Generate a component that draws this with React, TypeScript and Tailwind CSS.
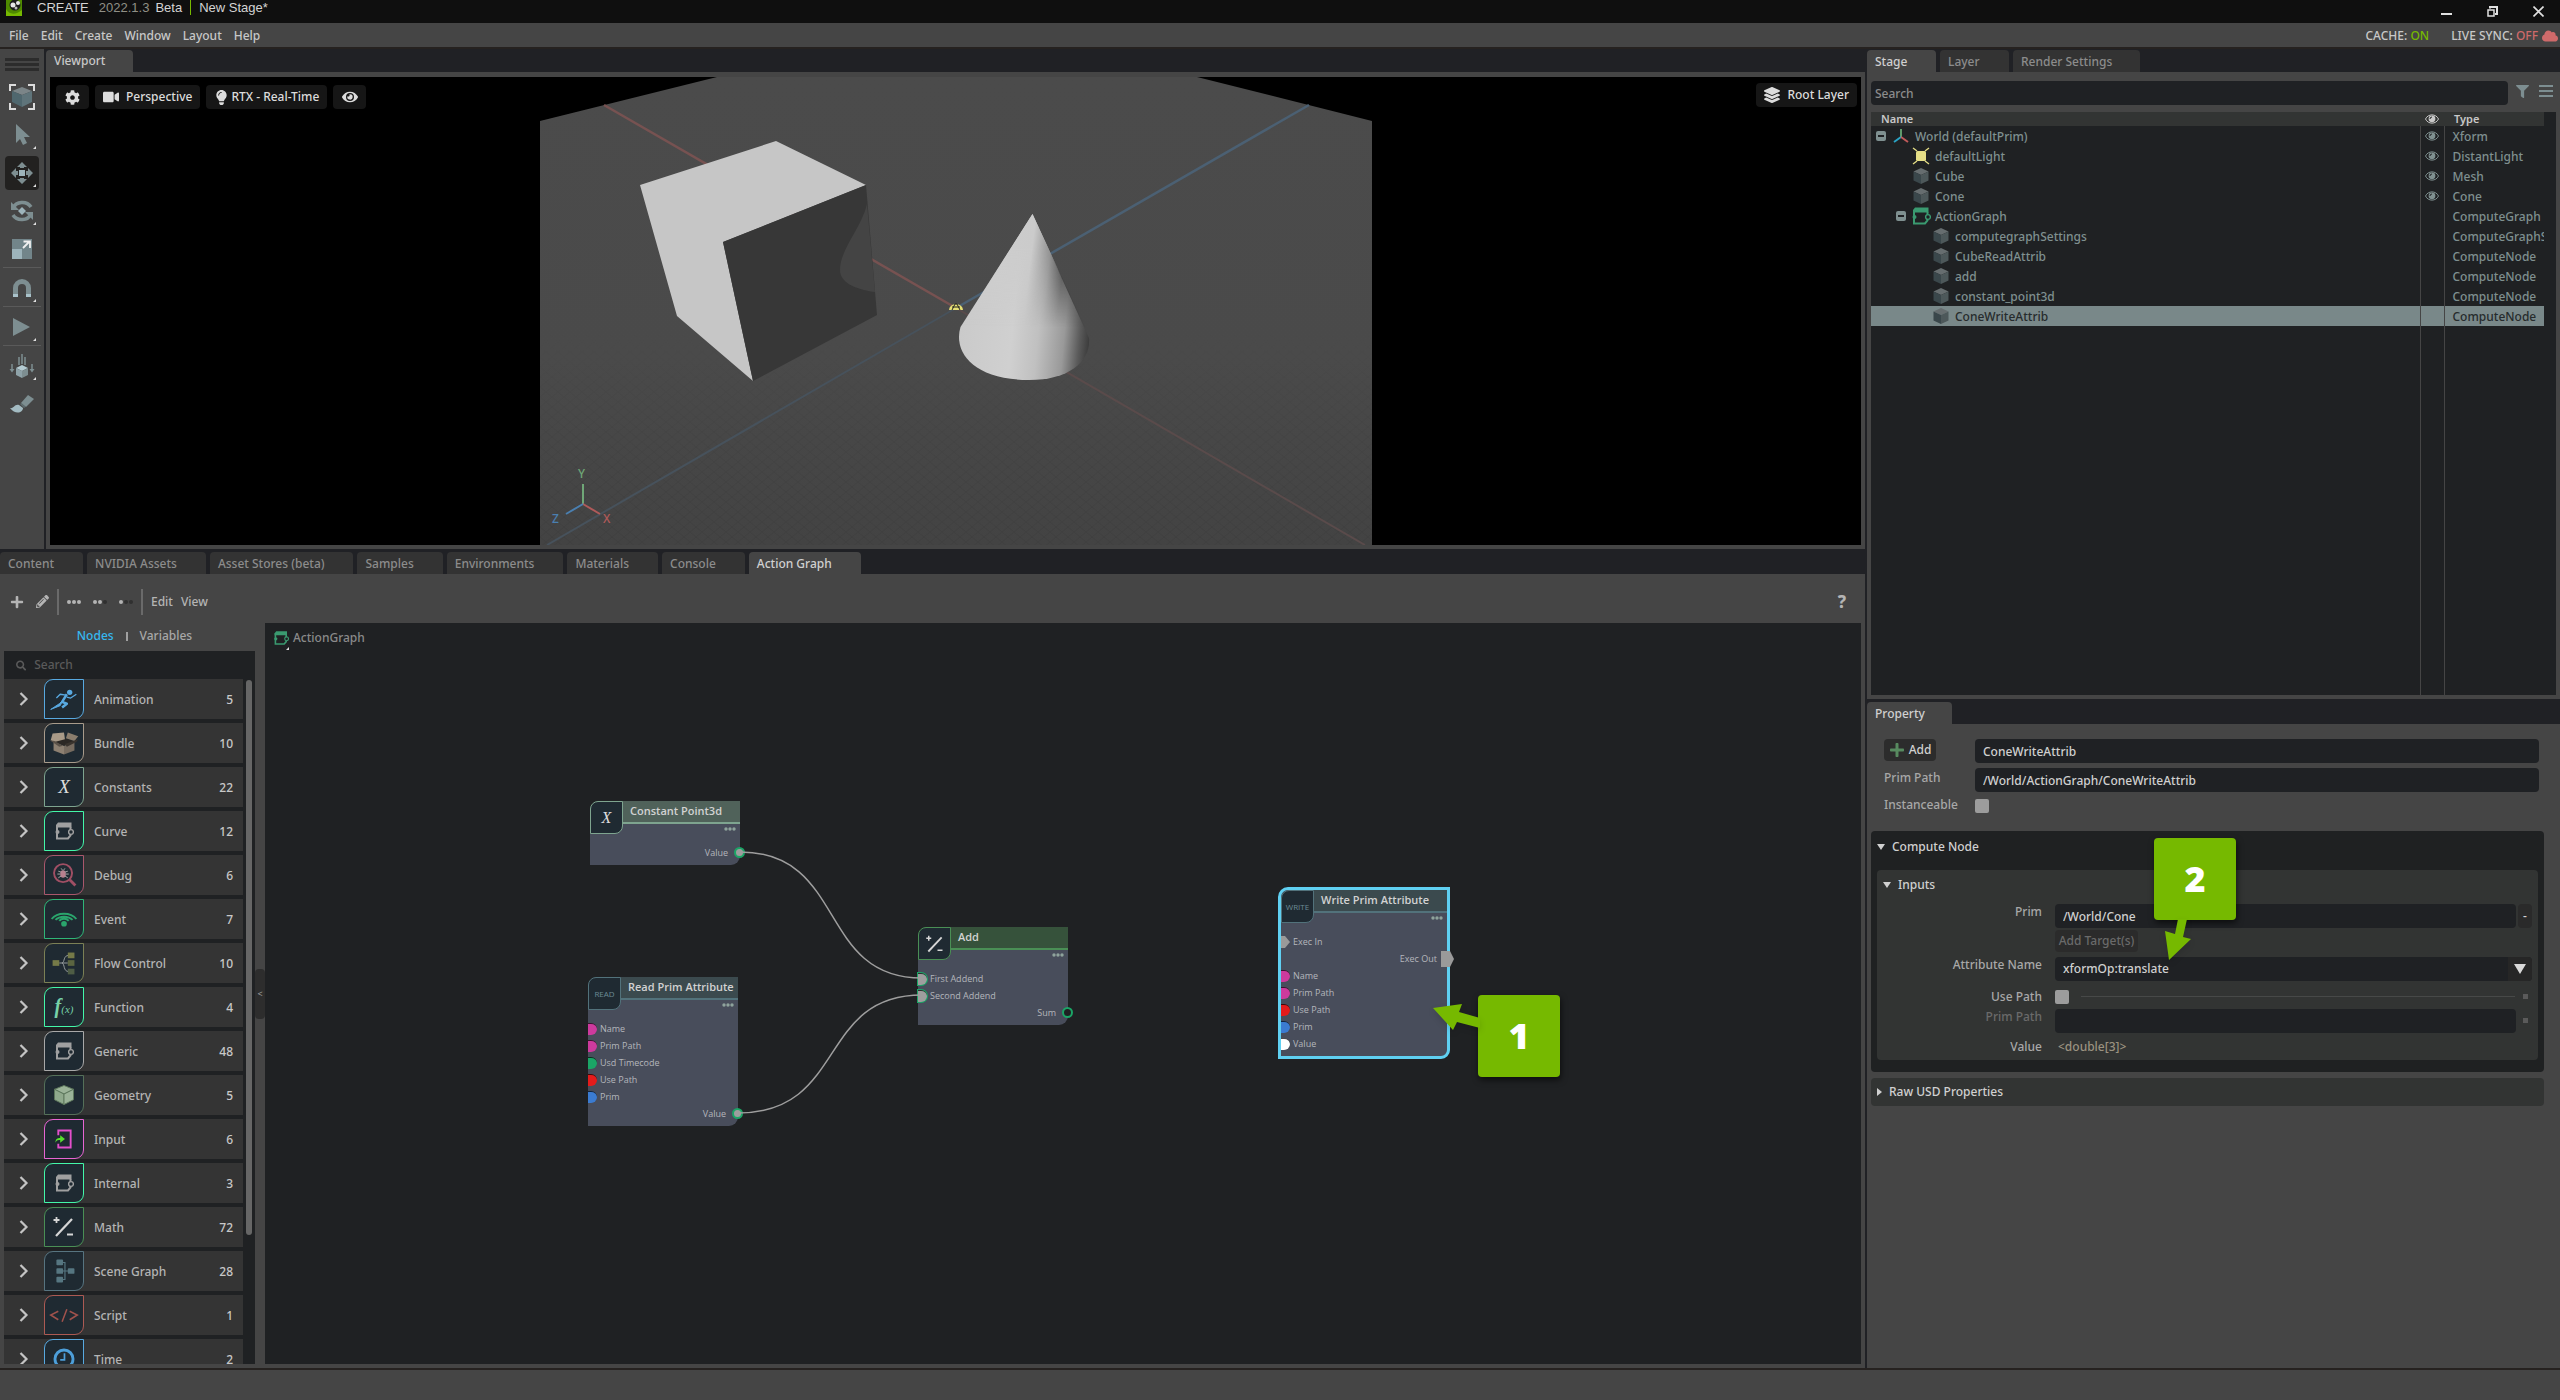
import type { ReactNode } from 'react';
import { FaCloud, FaCog, FaEye, FaFilter, FaLayerGroup, FaLightbulb, FaPencilAlt, FaPlus, FaSearch, FaVideo } from 'react-icons/fa';

const menus = ['File', 'Edit', 'Create', 'Window', 'Layout', 'Help'];

const bottomTabs = [
  'Content',
  'NVIDIA Assets',
  'Asset Stores (beta)',
  'Samples',
  'Environments',
  'Materials',
  'Console',
  'Action Graph'
];

/* ---------- shared icons ---------- */

function GraphGlyph({ className, dark = '#1f2a32' }: { className: string; dark?: string }) {
  return (
    <svg viewBox="0 0 20 20" className={className} fill="none" stroke="currentColor">
      <path d="M4 1.500h13.500v5H2V4z" fill="currentColor" stroke="none" />
      <path d="M3 5v12.500h11l2.500-3V6" strokeWidth="2" />
      <circle cx="3.500" cy="11" r="2" fill="currentColor" stroke="none" />
      <circle cx="17" cy="11" r="2.400" fill={dark} strokeWidth="1.400" />
    </svg>
  );
}

function CubeGlyph({ className }: { className: string }) {
  return (
    <svg viewBox="0 0 18 18" className={className}>
      <path d="M9 1l7.500 3.500L9 8 1.500 4.500z" fill="#666d6f" />
      <path d="M1.500 4.500L9 8v9l-7.500-3.500z" fill="#3a474b" />
      <path d="M16.500 4.500L9 8v9l7.500-3.500z" fill="#4d585a" />
    </svg>
  );
}

function Chevron() {
  return (
    <svg viewBox="0 0 10 14" className="h-[14px] w-[10px]" fill="none" stroke="#c4c4c4" strokeWidth="2.2">
      <path d="M1.500 1l6 6-6 6" />
    </svg>
  );
}

function PlusMinus({ className }: { className: string }) {
  return (
    <svg viewBox="0 0 24 24" className={className} fill="none" stroke="#d6d6d6">
      <path d="M4.500 2v6M1.500 5h6M15 19.500h6" strokeWidth="1.800" />
      <path d="M20 4L4 21" strokeWidth="2.200" />
    </svg>
  );
}

/* ---------- left toolbar ---------- */

function Corner() {
  return <path d="M31 28v3h-3z" fill="#e0e0e0" />;
}

const tools: { name: string; active?: boolean; art: ReactNode }[][] = [
  [
    {
      name: 'Select mode',
      art: (
        <g>
          <path d="M5 11V5h6M23 5h6v6M29 23v6h-6M11 29H5v-6" fill="none" stroke="#dcdcdc" strokeWidth="2" />
          <path d="M17 7l10 4-10 4-10-4z" fill="#7b8588" />
          <path d="M7 11l10 4v12L7 22z" fill="#4f676e" />
          <path d="M27 11l-10 4v12l10-5z" fill="#5f747a" />
        </g>
      )
    },
    {
      name: 'Select',
      art: (
        <g>
          <path d="M11 6v19l4-4 3 6 4-2-3-6h6z" fill="#7d8e91" />
          <Corner />
        </g>
      )
    },
    {
      name: 'Move',
      active: true,
      art: (
        <g fill="#7d8e91">
          <path d="M17 6l5 5h-3v1h-4v-1h-3zM17 28l5-5h-3v-1h-4v1h-3zM6 17l5-5v3h2v4h-2v3zM28 17l-5-5v3h-2v4h2v3z" />
          <rect x="14" y="14" width="6" height="6" fill="#9db4bb" />
          <Corner />
        </g>
      )
    },
    {
      name: 'Rotate',
      art: (
        <g>
          <path d="M8 14a10 9 0 0 1 18-1M26 20a10 9 0 0 1-18 1" fill="none" stroke="#7d8e91" strokeWidth="3.500" />
          <path d="M6 8v8h8zM28 26v-8h-8z" fill="#7d8e91" />
          <path d="M17 13l4 4-4 4-4-4z" fill="#9db4bb" />
          <Corner />
        </g>
      )
    },
    {
      name: 'Scale',
      art: (
        <g>
          <rect x="7" y="7" width="20" height="20" fill="#72858a" />
          <rect x="7" y="17" width="10" height="10" fill="#9db4bb" />
          <path d="M18 16l6-6M18.500 9.500h6.500V16" fill="none" stroke="#f0f0f0" strokeWidth="1.800" />
        </g>
      )
    }
  ],
  [
    {
      name: 'Snap',
      art: (
        <g>
          <path d="M10.500 23v-6a6.500 6.500 0 0 1 13 0v6" fill="none" stroke="#7d8e91" strokeWidth="5" />
          <path d="M8 23h5v3H8zM21 23h5v3h-5z" fill="#a9c2ca" />
          <Corner />
        </g>
      )
    }
  ],
  [
    {
      name: 'Play',
      art: (
        <g>
          <path d="M8 8l17 9-17 9z" fill="#7d8e91" />
          <Corner />
        </g>
      )
    }
  ],
  [
    {
      name: 'Physics',
      art: (
        <g>
          <path d="M14 8v8M17 5v10M20 8v8M7 15v7M27 15v7" stroke="#7d8e91" strokeWidth="1.500" />
          <path d="M4.500 20h5L7 23.500zM24.500 20h5L27 23.500z" fill="#7d8e91" />
          <path d="M17 16l6 3-6 3-6-3z" fill="#b4cbd2" />
          <path d="M11 19l6 3v7l-6-3z" fill="#8ea2a8" />
          <path d="M23 19l-6 3v7l6-3z" fill="#7d8e91" />
          <Corner />
        </g>
      )
    },
    {
      name: 'Paint',
      art: (
        <g>
          <path d="M5 21c4 1 4-4 9-3l4 3c0 5-8 7-13 0z" fill="#a3bbc2" />
          <path d="M16 16l7-8 6 4-8 8z" fill="#7d8e91" />
          <path d="M15 17l4 4 1.500-1-4-4z" fill="#5f6f72" />
        </g>
      )
    }
  ]
];

function Toolbar() {
  return (
    <aside className="flex w-11 shrink-0 flex-col items-center gap-px bg-[#454545] pt-[9px]">
      <div className="mb-[8px] flex h-[13px] w-[34px] flex-col justify-between">
        <div className="h-[3px] bg-[#2c2c2c]" />
        <div className="h-[3px] bg-[#2c2c2c]" />
        <div className="h-[3px] bg-[#2c2c2c]" />
      </div>
      {tools.map((group, i) => (
        <div
          key={i}
          className={`flex w-[38px] flex-col items-center gap-1 ${i > 0 ? 'border-t border-[#5a5a5a] pt-[3px]' : ''}`}
        >
          {group.map((tool) => (
            <button
              key={tool.name}
              aria-label={tool.name}
              className={`h-[34px] w-[34px] rounded ${tool.active ? 'bg-[#222120]' : ''}`}
            >
              <svg viewBox="0 0 34 34" className="h-full w-full">
                {tool.art}
              </svg>
            </button>
          ))}
        </div>
      ))}
    </aside>
  );
}

/* ---------- viewport ---------- */

function Scene() {
  return (
    <svg viewBox="0 0 832 468" className="h-full" fontFamily="'Noto Sans', sans-serif">
      <defs>
        <linearGradient id="cone" gradientUnits="userSpaceOnUse" x1="419" y1="262" x2="549" y2="274">
          <stop offset="0" stopColor="#cacaca" />
          <stop offset="0.400" stopColor="#d0d0d0" />
          <stop offset="0.600" stopColor="#c0c0c0" />
          <stop offset="0.800" stopColor="#999999" />
          <stop offset="0.920" stopColor="#5a5a5a" />
          <stop offset="1" stopColor="#3a3a3a" />
        </linearGradient>
        {/* the shaded side narrows towards the tip */}
        <linearGradient id="coneTip" gradientUnits="userSpaceOnUse" x1="455" y1="200" x2="521" y2="208">
          <stop offset="0" stopColor="#cdcdcd" />
          <stop offset="0.500" stopColor="#cbcbcb" />
          <stop offset="0.780" stopColor="#8f8f8f" />
          <stop offset="1" stopColor="#3a3a3a" />
        </linearGradient>
        <linearGradient id="tipFade" gradientUnits="userSpaceOnUse" x1="0" y1="170" x2="0" y2="250">
          <stop offset="0" stopColor="#fff" />
          <stop offset="1" stopColor="#000" />
        </linearGradient>
        <mask id="tipMask">
          <rect width="832" height="468" fill="url(#tipFade)" />
        </mask>
        <linearGradient id="floor" x1="0" y1="0" x2="0" y2="1">
          <stop offset="0" stopColor="#4b4b4b" />
          <stop offset="0.600" stopColor="#4a4a4a" />
          <stop offset="1" stopColor="#434343" />
        </linearGradient>
        <linearGradient id="gridFade" x1="0" y1="0" x2="0" y2="1">
          <stop offset="0.550" stopColor="#000" />
          <stop offset="1" stopColor="#fff" />
        </linearGradient>
        <pattern id="grid" width="12" height="10" patternUnits="userSpaceOnUse">
          <path d="M0 0l12 10M12 0L0 10" stroke="#3d3d3d" strokeWidth="1" />
        </pattern>
        <mask id="gridMask">
          <rect width="832" height="468" fill="url(#gridFade)" />
        </mask>
      </defs>
      <path d="M0 44L177 0h480l175 44v424H0z" fill="url(#floor)" />
      <rect width="832" height="468" fill="url(#grid)" mask="url(#gridMask)" opacity="0.600" />
      <g strokeWidth="2.500" fill="none">
        <path d="M64 28L416 231" stroke="#775251" />
        <path d="M416 231L825 468" stroke="#5a4b4b" strokeWidth="2" />
        <path d="M769 28L416 231" stroke="#4b6073" />
        <path d="M416 231L7 468" stroke="#47525c" strokeWidth="2" />
      </g>
      <path d="M100 108l136-44 90 44-143 57 30 139-76-65z" fill="#c6c6c6" />
      <path d="M183 165l143-57 11 130-124 66z" fill="#373737" />
      <path d="M327 127c-6 25-27 45-27 66 0 12 14 19 35 22z" fill="#444444" />
      <path d="M492.500 137L420.500 250C413 275 433 303 489 303c42 0 62-20 60-42z" fill="url(#cone)" />
      <path d="M492.500 137L421 250h124z" fill="url(#coneTip)" mask="url(#tipMask)" />
      <g transform="translate(416 230)">
        <path d="M-7 3a7 6 0 0 1 14 0z" fill="#e6e074" />
        <path d="M-4 3l3-6h2l3 6M-4 0h8" stroke="#222" fill="none" />
      </g>
      <g strokeWidth="2" fontSize="12">
        <path d="M43 427v-20" stroke="#6fa777" />
        <path d="M43 427l17 10" stroke="#b05a5a" />
        <path d="M43 427l-17 10" stroke="#4a7fb0" />
        <text x="38" y="401" fill="#6fa777">Y</text>
        <text x="63" y="446" fill="#b05a5a">X</text>
        <text x="12" y="446" fill="#4a7fb0">Z</text>
      </g>
    </svg>
  );
}

function ViewportButton({ children, label }: { children: ReactNode; label?: string }) {
  return (
    <button aria-label={label} className="flex h-6 min-w-[33px] items-center justify-center gap-[7px] rounded bg-[#161616] px-2 text-[#dcdcdc]">
      {children}
    </button>
  );
}

function Viewport() {
  return (
    <section className="flex min-w-0 flex-1 flex-col">
      <div className="flex h-[23px] shrink-0 items-end">
        <div className="flex h-[22px] w-[87px] items-center rounded-t bg-[#454545] px-2">Viewport</div>
      </div>
      <div className="min-h-0 flex-1 bg-[#454545] px-1 pt-[5px] pb-1">
        <div className="relative flex h-full justify-center overflow-hidden bg-black">
          <Scene />
          <div className="absolute top-2 left-1.5 flex gap-1.5">
            <ViewportButton label="Settings">
              <FaCog size={15} />
            </ViewportButton>
            <ViewportButton>
              <FaVideo size={16} />
              Perspective
            </ViewportButton>
            <ViewportButton>
              <span className="flex items-center gap-0.5">
                <FaLightbulb size={15} />
                RTX - Real-Time
              </span>
            </ViewportButton>
            <ViewportButton label="Visibility">
              <FaEye size={16} />
            </ViewportButton>
          </div>
          <div className="absolute top-1.5 right-1">
            <ViewportButton>
              <FaLayerGroup size={16} />
              Root Layer
            </ViewportButton>
          </div>
        </div>
      </div>
    </section>
  );
}

/* ---------- node library ---------- */

const graphBox = <GraphGlyph className="h-5 w-5 text-[#a0a0a0]" />;

const categories: { name: string; count: number; border: string; icon: ReactNode }[] = [
  {
    name: 'Animation',
    count: 5,
    border: 'border-[#58a9e0]',
    icon: (
      <svg viewBox="0 0 40 40" className="h-10 w-10" fill="none" stroke="#58a9e0" strokeLinejoin="round">
        <circle cx="26" cy="13" r="2.800" fill="#58a9e0" stroke="none" />
        <path d="M23 15l-5 8 5 2-5 4" strokeWidth="2.600" />
        <path d="M22 16l-6-1-4 4M23 18l4 1 6-4" strokeWidth="1.400" />
        <path d="M19 21l-4 4-9 6 10-4z" fill="#58a9e0" strokeWidth="1" />
      </svg>
    )
  },
  {
    name: 'Bundle',
    count: 10,
    border: 'border-[#a89b8b]',
    icon: (
      <svg viewBox="0 0 40 40" className="h-10 w-10">
        <path d="M9 19l11 4v9L9 28z" fill="#8d8071" />
        <path d="M31 19l-11 4v9l11-4z" fill="#776c60" />
        <path d="M9 18l10-3 12 3-11 5z" fill="#2c2824" />
        <path d="M8 10l12-1 1 7-11 3-4-2z" fill="#a89a88" />
        <path d="M24 9l11 4-4 5-9-3z" fill="#8a7d6d" />
        <path d="M5 17l5 1 9 5-4 1z" fill="#5a5148" />
        <path d="M35 16l-14 5 2 3 10-5z" fill="#3a342e" />
      </svg>
    )
  },
  {
    name: 'Constants',
    count: 22,
    border: 'border-[#7ea48f]',
    icon: <span className="font-['Liberation_Serif',serif] text-[19px] text-[#dddddd] italic">X</span>
  },
  { name: 'Curve', count: 12, border: 'border-[#43f7a9]', icon: graphBox },
  {
    name: 'Debug',
    count: 6,
    border: 'border-[#a9576c]',
    icon: (
      <svg viewBox="0 0 40 40" className="h-10 w-10" fill="none">
        <circle cx="19" cy="18" r="9.500" stroke="#a04f64" strokeWidth="2" />
        <path d="M26 25l6 6" stroke="#a04f64" strokeWidth="3" />
        <ellipse cx="19" cy="19" rx="3" ry="4" fill="#b8808e" />
        <path d="M17 13l1.500 2M21 13l-1.500 2M14 16l3 1M24 16l-3 1M13 19h3M25 19h-3M14 23l3-2M24 23l-3-2" stroke="#a9a9a9" />
      </svg>
    )
  },
  {
    name: 'Event',
    count: 7,
    border: 'border-[#2fb678]',
    icon: (
      <svg viewBox="0 0 40 40" className="h-10 w-10" fill="none" stroke="#2aa56c" strokeWidth="2">
        <path d="M7 20a15 11 0 0 1 26 0M11 21a11 8 0 0 1 18 0M15 22a6 5 0 0 1 10 0" />
        <circle cx="20" cy="25" r="3" fill="#2aa56c" stroke="none" />
      </svg>
    )
  },
  {
    name: 'Flow Control',
    count: 10,
    border: 'border-[#7b8055]',
    icon: (
      <svg viewBox="0 0 40 40" className="h-10 w-10" fill="none">
        <path d="M15 20h9M18 20c3-1 1-8 7-8M18 20c3 1 1 9 7 9" stroke="#9aa0a0" />
        <rect x="8" y="17" width="7" height="6" fill="#757a48" />
        <rect x="24" y="9" width="7" height="6" fill="#757a48" />
        <rect x="24" y="17" width="7" height="6" fill="#5b6540" />
        <rect x="24" y="26" width="7" height="6" fill="#4e5d45" />
      </svg>
    )
  },
  {
    name: 'Function',
    count: 4,
    border: 'border-[#43f7a9]',
    icon: (
      <span className="font-['Liberation_Serif',serif] text-[20px] font-bold text-[#77d1a8] italic">
        f<span className="text-[11px] font-normal">(x)</span>
      </span>
    )
  },
  { name: 'Generic', count: 48, border: 'border-[#a8a8a8]', icon: graphBox },
  {
    name: 'Geometry',
    count: 5,
    border: 'border-[#557059]',
    icon: (
      <svg viewBox="0 0 40 40" className="h-10 w-10" stroke="#5d775c">
        <path d="M20 10l10 4-10 5-10-5z" fill="#9bb398" />
        <path d="M10 14l10 5v11l-10-5z" fill="#8fa98c" />
        <path d="M30 14l-10 5v11l10-5z" fill="#9bb398" />
      </svg>
    )
  },
  {
    name: 'Input',
    count: 6,
    border: 'border-[#e765d3]',
    icon: (
      <svg viewBox="0 0 40 40" className="h-10 w-10" fill="none">
        <path d="M14 16v-5h13v18H14v-4" stroke="#e34fcb" strokeWidth="2" />
        <path d="M11 24c0-4 2-5 5-5v-3l5 4-5 4v-3c-2 0-4 0-5 3z" fill="#58df2f" />
      </svg>
    )
  },
  { name: 'Internal', count: 3, border: 'border-[#43f7a9]', icon: graphBox },
  { name: 'Math', count: 72, border: 'border-[#4a8f55]', icon: <PlusMinus className="h-6 w-6" /> },
  {
    name: 'Scene Graph',
    count: 28,
    border: 'border-[#577480]',
    icon: (
      <svg viewBox="0 0 40 40" className="h-10 w-10" fill="#567681">
        <path d="M16 11h5v18h-5M16 20h10" fill="none" stroke="#567681" strokeWidth="1.200" />
        <rect x="12" y="8" width="7" height="6" rx="1" />
        <rect x="12" y="17" width="7" height="6" rx="1" />
        <rect x="12" y="26" width="7" height="6" rx="1" />
        <rect x="24" y="17" width="7" height="6" rx="1" />
      </svg>
    )
  },
  {
    name: 'Script',
    count: 1,
    border: 'border-[#ac5a53]',
    icon: (
      <svg viewBox="0 0 40 40" className="h-10 w-10" fill="none" stroke="#a0524c" strokeWidth="1.600">
        <path d="M14 16l-8 4 8 5M26 16l8 4-8 5M23 14l-5 13" />
      </svg>
    )
  },
  {
    name: 'Time',
    count: 2,
    border: 'border-[#58a9e0]',
    icon: (
      <svg viewBox="0 0 40 40" className="h-10 w-10" fill="none" stroke="#4d9fda">
        <circle cx="20" cy="20" r="9.500" strokeWidth="3" />
        <path d="M20.500 14v7H16" strokeWidth="1.800" />
      </svg>
    )
  }
];

function NodeLibrary() {
  return (
    <div className="flex w-[265px] shrink-0 pl-1">
      <div className="flex w-[251px] shrink-0 flex-col">
        <div className="flex h-7 shrink-0 items-center justify-center gap-3 pb-0.5 pl-2.5 text-[#a8a8a8]">
          <button className="text-[#35b8f0]">Nodes</button>
          <span className="h-[9px] w-[2px] bg-[#a0a0a0]" />
          <button>Variables</button>
        </div>
        <label className="flex h-7 shrink-0 items-center gap-2 bg-[#1f2123] pl-3 text-[#5a5a5a]">
          <FaSearch size={11} />
          <input aria-label="Search nodes" placeholder="Search" className="w-full bg-transparent outline-none placeholder:text-[#5a5a5a]" />
        </label>
        <div className="flex min-h-0 flex-1 justify-between overflow-hidden bg-[#1f2123] pr-[3px]">
          <ul className="flex w-[239px] flex-col gap-1">
            {categories.map((cat) => (
              <li key={cat.name} className="flex h-10 shrink-0 items-center bg-[#343434] pr-2.5 text-[#b4b4b4]">
                <button aria-label={`Expand ${cat.name}`} className="flex w-10 justify-center">
                  <Chevron />
                </button>
                <div
                  className={`flex h-10 w-10 items-center justify-center overflow-hidden rounded-tl-[9px] rounded-br-[9px] border bg-[#1f2a32] ${cat.border}`}
                >
                  {cat.icon}
                </div>
                <span className="flex-1 pt-0.5 pl-2.5">{cat.name}</span>
                <span className="pt-0.5 text-[#c8c8c8]">{cat.count}</span>
              </li>
            ))}
          </ul>
          <div className="mt-px h-[81%] w-1.5 rounded bg-[#666666]" />
        </div>
      </div>
      <button
        aria-label="Collapse"
        className="h-[50px] w-2.5 self-center rounded-sm bg-[#2d2d2d] text-[9px] text-[#9a9a9a]"
      >
        &lt;
      </button>
    </div>
  );
}

/* ---------- graph canvas ---------- */

interface Port {
  label: string;
  color: string;
  side?: 'out';
  shape?: 'exec';
}

const PINK = 'bg-[#cd3a9d]';
const GREEN = 'bg-[#1ba566]';
const RED = 'bg-[#e41b1b]';
const BLUE = 'bg-[#3b7bd0]';
const linkedIn = 'bg-[#9e9e9e] shadow-[0_0_0_1px_#1ba566]';

interface GraphNodeProps {
  title: string;
  place: string;
  header: string;
  accent: string;
  icon: ReactNode;
  ports: Port[];
  selected?: boolean;
}

function PortRow({ port }: { port: Port }) {
  if (port.side === 'out') {
    return (
      <div className="flex h-[17px] items-center justify-end">
        <span className={port.shape === 'exec' ? 'pr-1' : 'pr-1.5'}>{port.label}</span>
        {port.shape === 'exec' ? (
          <svg viewBox="0 0 13 16" className="-mr-[7px] h-4 w-[13px]">
            <path d="M0 0h9l4 8-4 8H0z" fill="#9a9a9a" />
          </svg>
        ) : (
          <span className={`-mr-[5px] h-[11px] w-[11px] rounded-full border-2 border-[#1ba566] ${port.color}`} />
        )}
      </div>
    );
  }
  return (
    <div className="flex h-[17px] items-center gap-[3px]">
      {port.shape === 'exec' ? (
        <svg viewBox="0 0 9 12" className="h-3 w-[9px]">
          <path d="M0 0h4l5 6-5 6H0z" fill="#9a9a9a" />
        </svg>
      ) : (
        <span className={`h-3 w-[9px] rounded-r-full border-t border-black/70 ${port.color}`} />
      )}
      <span>{port.label}</span>
    </div>
  );
}

function GraphNode({ title, place, header, accent, icon, ports, selected }: GraphNodeProps) {
  return (
    <div
      className={`absolute rounded-tl-[10px] rounded-br-[9px] bg-[#484d5b] pb-1 ${place} ${
        selected ? 'w-[172px] border-[3px] border-[#5fd0f2]' : 'w-[150px]'
      }`}
    >
      <div className="relative mb-5">
        <div className={`ml-6 flex h-[23px] items-center border-b-2 pb-0.5 pl-4 font-['Open_Sans',sans-serif] text-[11px] font-semibold whitespace-nowrap text-[#d2d2d2] ${header} ${accent}`}>
          {title}
        </div>
        <div
          className={`absolute top-0 left-0 flex h-[33px] w-[33px] items-center justify-center overflow-hidden rounded-tl-[8px] rounded-br-[8px] border bg-[#1f2a32] ${accent}`}
        >
          {icon}
        </div>
        <svg viewBox="0 0 12 4" className="absolute top-[26px] right-1 h-1 w-3" fill="#8fa39c">
          <circle cx="2" cy="2" r="1.700" />
          <circle cx="6" cy="2" r="1.700" />
          <circle cx="10" cy="2" r="1.700" />
        </svg>
      </div>
      <div className="font-['Open_Sans',sans-serif] text-[9px] leading-[17px] text-[#b4b6bb]">
        {ports.map((port) => (
          <PortRow key={port.label} port={port} />
        ))}
      </div>
    </div>
  );
}

const nodes: GraphNodeProps[] = [
  {
    title: 'Constant Point3d',
    place: 'left-[325px] top-[178px]',
    header: 'bg-[#50625a]',
    accent: 'border-[#7ea48f]',
    icon: <span className="font-['Liberation_Serif',serif] text-[16px] text-[#dddddd] italic">X</span>,
    ports: [{ label: 'Value', color: 'bg-[#9e9e9e]', side: 'out' }]
  },
  {
    title: 'Read Prim Attribute',
    place: 'left-[323px] top-[354px]',
    header: 'bg-[#3b4a4e]',
    accent: 'border-[#52727b]',
    icon: <span className="font-['Open_Sans',sans-serif] text-[8px] text-[#6b8b95]">READ</span>,
    ports: [
      { label: 'Name', color: PINK },
      { label: 'Prim Path', color: PINK },
      { label: 'Usd Timecode', color: GREEN },
      { label: 'Use Path', color: RED },
      { label: 'Prim', color: BLUE },
      { label: 'Value', color: 'bg-[#9e9e9e]', side: 'out' }
    ]
  },
  {
    title: 'Add',
    place: 'left-[653px] top-[304px]',
    header: 'bg-[#36523b]',
    accent: 'border-[#4a8f55]',
    icon: <PlusMinus className="h-5 w-5" />,
    ports: [
      { label: 'First Addend', color: linkedIn },
      { label: 'Second Addend', color: linkedIn },
      { label: 'Sum', color: 'bg-[#1f2123]', side: 'out' }
    ]
  },
  {
    title: 'Write Prim Attribute',
    place: 'left-[1013px] top-[264px]',
    header: 'bg-[#3b4a4e]',
    accent: 'border-[#52727b]',
    icon: <span className="font-['Open_Sans',sans-serif] text-[8px] text-[#6b8b95]">WRITE</span>,
    selected: true,
    ports: [
      { label: 'Exec In', color: '', shape: 'exec' },
      { label: 'Exec Out', color: '', side: 'out', shape: 'exec' },
      { label: 'Name', color: PINK },
      { label: 'Prim Path', color: PINK },
      { label: 'Use Path', color: RED },
      { label: 'Prim', color: BLUE },
      { label: 'Value', color: 'bg-white' }
    ]
  }
];

function Callout({ label, place }: { label: string; place: string }) {
  return (
    <div
      className={`absolute flex h-[82px] w-[82px] items-center justify-center rounded bg-[#76b900] font-['Noto_Sans',sans-serif] text-[36px] font-black text-white shadow-[1px_3px_6px_rgba(0,0,0,0.6)] ${place}`}
    >
      {label}
    </div>
  );
}

function GraphCanvas() {
  return (
    <div className="relative mr-1 min-w-0 flex-1 overflow-hidden bg-[#1f2123]">
      <div className="flex items-center gap-1 px-2 py-[7px] text-[#8a8a8a]">
        <span className="relative">
          <GraphGlyph className="h-4 w-4 text-[#3a9a70]" dark="#1f2123" />
          <svg viewBox="0 0 3 3" className="absolute right-0 -bottom-1 h-[3px] w-[3px]">
            <path d="M3 0v3H0z" fill="#e0e0e0" />
          </svg>
        </span>
        ActionGraph
      </div>
      {nodes.map((node) => (
        <GraphNode key={node.title} {...node} />
      ))}
      <svg className="pointer-events-none absolute inset-0 h-full w-full" fill="none" stroke="#9e9e9e" strokeWidth="1.500">
        <path d="M475 229C582 229 552 355 657 355" />
        <path d="M473 490C582 490 552 372 657 372" />
      </svg>
      <Callout label="1" place="left-[1213px] top-[372px]" />
      <svg viewBox="0 0 48 28" className="absolute top-[380px] left-[1167px] h-7 w-12 drop-shadow-md">
        <path d="M1 5L30 1l-3 8 21 6v10l-23-6-4 8z" fill="#76b900" />
      </svg>
    </div>
  );
}

function Dots({ lit }: { lit: number }) {
  return (
    <button aria-label={`Detail level ${lit}`}>
      <svg viewBox="0 0 14 4" className="h-1 w-[14px]">
        {[2, 7, 12].map((cx, i) => (
          <circle key={cx} cx={cx} cy="2" r="2" fill={i < lit ? '#b4b4b4' : '#303030'} />
        ))}
      </svg>
    </button>
  );
}

function ActionGraphPanel() {
  return (
    <section className="flex min-h-0 flex-[819] flex-col">
      <nav className="flex h-[25px] shrink-0 items-end gap-1 text-[#8c8c8c]">
        {bottomTabs.map((tab) => (
          <button
            key={tab}
            className={`flex h-[22px] items-center rounded-t pt-0.5 pr-[29px] pl-2 ${
              tab === 'Action Graph' ? 'bg-[#454545] text-[#d0d0d0]' : 'bg-[#333333]'
            }`}
          >
            {tab}
          </button>
        ))}
      </nav>
      <div className="flex min-h-0 flex-1 flex-col bg-[#454545] pb-1">
        <div className="flex h-[49px] shrink-0 items-center gap-3 pt-1.5 pr-[19px] pl-2.5 text-[#b4b4b4]">
          <button aria-label="New graph">
            <FaPlus size={14} />
          </button>
          <button aria-label="Edit graph">
            <FaPencilAlt size={13} />
          </button>
          <span className="-mx-1 h-[26px] w-0.5 bg-[#6a6a6a]" />
          <Dots lit={3} />
          <Dots lit={2} />
          <Dots lit={1} />
          <span className="-mx-1 h-[26px] w-0.5 bg-[#6a6a6a]" />
          <div className="flex flex-1 gap-2">
            <button>Edit</button>
            <button>View</button>
          </div>
          <button className="text-[17px] font-extrabold">?</button>
        </div>
        <div className="flex min-h-0 flex-1">
          <NodeLibrary />
          <GraphCanvas />
        </div>
      </div>
    </section>
  );
}

/* ---------- stage ---------- */

interface Prim {
  name: string;
  type: string;
  level: 0 | 1 | 2;
  kind: 'xform' | 'light' | 'cube' | 'graph';
  visible?: boolean;
  open?: boolean;
  selected?: boolean;
}

const prims: Prim[] = [
  { name: 'World (defaultPrim)', type: 'Xform', level: 0, kind: 'xform', visible: true, open: true },
  { name: 'defaultLight', type: 'DistantLight', level: 1, kind: 'light', visible: true },
  { name: 'Cube', type: 'Mesh', level: 1, kind: 'cube', visible: true },
  { name: 'Cone', type: 'Cone', level: 1, kind: 'cube', visible: true },
  { name: 'ActionGraph', type: 'ComputeGraph', level: 1, kind: 'graph', open: true },
  { name: 'computegraphSettings', type: 'ComputeGraphSettings', level: 2, kind: 'cube' },
  { name: 'CubeReadAttrib', type: 'ComputeNode', level: 2, kind: 'cube' },
  { name: 'add', type: 'ComputeNode', level: 2, kind: 'cube' },
  { name: 'constant_point3d', type: 'ComputeNode', level: 2, kind: 'cube' },
  { name: 'ConeWriteAttrib', type: 'ComputeNode', level: 2, kind: 'cube', selected: true }
];

const indent = ['pl-0', 'pl-5', 'pl-10'];

function PrimIcon({ kind }: { kind: Prim['kind'] }) {
  if (kind === 'xform') {
    return (
      <svg viewBox="0 0 18 18" className="h-[18px] w-[18px]" fill="none" strokeWidth="2">
        <path d="M9 2v9" stroke="#5f9a6b" />
        <path d="M9 10l-7 5" stroke="#2aa3c4" />
        <path d="M9 10l7 5" stroke="#c05a5a" />
      </svg>
    );
  }
  if (kind === 'light') {
    return (
      <svg viewBox="0 0 18 18" className="h-[18px] w-[18px]">
        <path d="M1 1l4 3M17 1l-4 3M1 17l4-3M17 17l-4-3" stroke="#e5de86" strokeWidth="1.300" />
        <rect x="4" y="4" width="10" height="10" rx="1.500" fill="#e5de86" />
      </svg>
    );
  }
  if (kind === 'graph') {
    return <GraphGlyph className="h-5 w-5 text-[#3a9a70]" dark="#1f2123" />;
  }
  return <CubeGlyph className="h-[18px] w-[18px]" />;
}

function VisibleEye({ color }: { color: string }) {
  return (
    <svg viewBox="0 0 14 10" className="mx-auto h-2.5 w-3.5">
      <path d="M.5 5C3-.5 11-.5 13.500 5 11 10.500 3 10.500.5 5z" fill="none" stroke={color} />
      <circle cx="7" cy="4.800" r="3.400" fill={color} />
      <path d="M5 5a2 2 0 0 1 2-2" stroke="#1f2123" fill="none" />
    </svg>
  );
}

function Stage() {
  return (
    <section className="flex min-h-0 flex-[650] flex-col">
      <nav className="flex h-[23px] shrink-0 items-end gap-1 text-[#8c8c8c]">
        <button className="flex h-[22px] w-[69px] items-center rounded-t bg-[#454545] px-2 pt-0.5 text-[#d0d0d0]">Stage</button>
        <button className="flex h-[22px] w-[69px] items-center rounded-t bg-[#333333] px-2 pt-0.5">Layer</button>
        <button className="flex h-[22px] items-center rounded-t bg-[#333333] pt-0.5 pr-7 pl-2">Render Settings</button>
      </nav>
      <div className="flex min-h-0 flex-1 flex-col bg-[#454545] px-1 pt-[9px] pb-1">
        <div className="mb-[7px] flex items-center text-[#7d8e91]">
          <input
            aria-label="Search stage"
            placeholder="Search"
            className="h-6 min-w-0 flex-1 rounded-sm bg-[#1f2124] px-1 outline-none placeholder:text-[#8c8c8c]"
          />
          <button aria-label="Filter" className="pr-2.5 pb-1 pl-2">
            <FaFilter size={13} />
          </button>
          <button aria-label="Options" className="pr-[3px] pb-1">
            <svg viewBox="0 0 14 12" className="h-3 w-3.5" stroke="currentColor" strokeWidth="2">
              <path d="M0 1h14M0 6h14M0 11h14" />
            </svg>
          </button>
        </div>
        <div className="min-h-0 flex-1 bg-[#1f2123] pr-3">
          <table className="h-full w-full table-fixed border-collapse text-left">
            <colgroup>
              <col />
              <col className="w-6" />
              <col className="w-[100px]" />
            </colgroup>
            <thead>
              <tr className="h-[14px] bg-[#323433] text-[11px] leading-[14px] text-[#c8c8c8]">
                <th className="h-[14px] py-0 pl-2.5 font-semibold">Name</th>
                <th className="py-0">
                  <VisibleEye color="#c8c8c8" />
                </th>
                <th className="py-0 pl-2.5 font-semibold">Type</th>
              </tr>
            </thead>
            <tbody>
              {prims.map((prim) => (
                <tr key={prim.name} className={`h-5 leading-[18px] ${prim.selected ? 'bg-[#798889] text-[#262b2c]' : 'text-[#7f9090]'}`}>
                  <td className="h-5 p-0">
                    <div className={`flex h-5 items-center ${indent[prim.level]}`}>
                      <span className="flex w-5 justify-center">
                        {prim.open && (
                          <button aria-label={`Collapse ${prim.name}`} className="flex h-2.5 w-2.5 items-center justify-center rounded-xs bg-[#7f9090]">
                            <span className="h-0.5 w-1.5 bg-[#1f2123]" />
                          </button>
                        )}
                      </span>
                      <span className="mr-1 flex w-5 justify-center">
                        <PrimIcon kind={prim.kind} />
                      </span>
                      <span className="pt-0.5">{prim.name}</span>
                    </div>
                  </td>
                  <td className="border-x border-[#454545] p-0">{prim.visible && <VisibleEye color="#7f9090" />}</td>
                  <td className="overflow-hidden pt-0.5 pr-0 pb-0 pl-2 whitespace-nowrap">{prim.type}</td>
                </tr>
              ))}
              <tr>
                <td />
                <td className="border-x border-[#454545]" />
                <td />
              </tr>
            </tbody>
          </table>
        </div>
      </div>
    </section>
  );
}

/* ---------- property ---------- */

const field = 'h-6 min-w-0 rounded-sm bg-[#1f2124] px-2 text-[#d0d0d0] outline-none';
const tick = 'h-[14px] w-[14px] appearance-none rounded-xs bg-[#9c9c9c]';
const rowLabel = 'w-[166px] shrink-0 pr-[1px] text-right';

function Property() {
  return (
    <section className="flex min-h-0 flex-[669] flex-col">
      <nav className="flex h-[25px] shrink-0 items-end">
        <button className="flex h-[22px] w-[85px] items-center rounded-t bg-[#454545] px-2 pt-0.5 text-[#d0d0d0]">Property</button>
      </nav>
      <div className="flex min-h-0 flex-1 flex-col bg-[#454545] pt-[15px] pr-4 pl-1 text-[#a8a8a8]">
        <div className="mb-3.5 grid grid-cols-[91px_1fr] gap-y-[5px] pr-[5px] pl-[13px]">
          <div>
            <button className="flex h-[22px] w-[52px] items-center justify-center gap-1 rounded-sm bg-[#2c2c2c] text-[#d0d0d0]">
              <FaPlus size={16} className="text-[#578a5f]" />
              Add
            </button>
          </div>
          <input aria-label="Name" defaultValue="ConeWriteAttrib" className={field} />
          <label htmlFor="primPath" className="leading-5">
            Prim Path
          </label>
          <input id="primPath" defaultValue="/World/ActionGraph/ConeWriteAttrib" className={field} />
          <label htmlFor="instanceable" className="leading-4">
            Instanceable
          </label>
          <div className="pt-0.5">
            <input id="instanceable" type="checkbox" className={tick} />
          </div>
        </div>

        <div className="mb-1.5 rounded-sm bg-[#1f2122] px-1.5 pb-3">
          <button className="flex h-[39px] w-full items-center gap-[7px] pb-2 text-[#d0d0d0]">
            <svg viewBox="0 0 8 6" className="h-1.5 w-2">
              <path d="M0 0h8L4 6z" fill="#d0d0d0" />
            </svg>
            Compute Node
          </button>
          <div className="relative rounded-sm bg-[#323433] pr-1.5 pb-[5px]">
            <button className="flex h-[34px] items-center gap-[7px] pb-1 pl-1.5 text-[#d0d0d0]">
              <svg viewBox="0 0 8 6" className="h-1.5 w-2">
                <path d="M0 0h8L4 6z" fill="#d0d0d0" />
              </svg>
              Inputs
            </button>
            <div className="flex gap-3">
              <label htmlFor="prim" className={rowLabel}>
                Prim
              </label>
              <div className="flex flex-1 gap-0.5">
                <input id="prim" defaultValue="/World/Cone" className={`flex-1 ${field}`} />
                <button aria-label="Remove target" className="h-6 w-[14px] rounded-sm bg-[#2a2a2a] text-[#d0d0d0]">
                  -
                </button>
              </div>
            </div>
            <div className="mt-0.5 mb-[5px] flex pl-[178px]">
              <button className="h-[22px] w-[83px] rounded-sm bg-[#2b2b2b] text-[#6a6a6a]">Add Target(s)</button>
            </div>
            <div className="flex gap-3">
              <label htmlFor="attributeName" className={rowLabel}>
                Attribute Name
              </label>
              <div className="relative flex-1">
                <select id="attributeName" className="h-6 w-full appearance-none rounded bg-[#1f2124] px-2 text-[#d0d0d0] outline-none">
                  <option>xformOp:translate</option>
                </select>
                <span className="pointer-events-none absolute top-0 right-0 flex h-6 w-6 items-center justify-center rounded-r bg-[#262626]">
                  <svg viewBox="0 0 12 10" className="h-2.5 w-3">
                    <path d="M0 0h12L6 10z" fill="#d8d8d8" />
                  </svg>
                </span>
              </div>
            </div>
            <div className="mt-[7px] mb-1 flex h-[17px] items-center gap-3">
              <label htmlFor="usePath" className={rowLabel}>
                Use Path
              </label>
              <input id="usePath" type="checkbox" className={tick} />
              <span className="h-px flex-1 bg-[#474948]" />
              <span className="mr-1 -ml-1 h-[5px] w-[5px] bg-[#5a5a5a]" />
            </div>
            <div className="flex gap-3">
              <label htmlFor="nodePrimPath" className={`${rowLabel} text-[#6a6a6a]`}>
                Prim Path
              </label>
              <input id="nodePrimPath" className={`-mr-[5px] flex-1 ${field}`} />
              <span className="mt-[9px] mr-1 h-[5px] w-[5px] bg-[#5a5a5a]" />
            </div>
            <div className="mt-[5px] flex h-[17px] items-center gap-[15px]">
              <span className={rowLabel}>Value</span>
              <span className="text-[#9b9280]">&lt;double[3]&gt;</span>
            </div>
            <Callout label="2" place="left-[277px] -top-8" />
            <svg viewBox="0 0 28 42" className="absolute top-[49px] left-[287px] h-[42px] w-7 drop-shadow-md">
              <path d="M14 0h9l-4 18 8 2L5 41 1 12l10 3z" fill="#76b900" />
            </svg>
          </div>
        </div>

        <button className="flex h-7 items-center gap-[7px] rounded-sm bg-[#323433] px-1.5 text-[#d0d0d0]">
          <svg viewBox="0 0 5 8" className="h-2 w-[5px]">
            <path d="M0 0l5 4-5 4z" fill="#d0d0d0" />
          </svg>
          Raw USD Properties
        </button>
      </div>
    </section>
  );
}

export default function App() {
  return (
    <div className="flex h-screen flex-col overflow-hidden bg-[#202125] font-['Noto_Sans',sans-serif] text-[12px] leading-4 font-medium text-[#c8c8c8]">
      <header className="flex h-[23px] shrink-0 bg-[#0f0f0f] pr-4 pl-1.5 font-['Liberation_Sans',sans-serif] text-[13px] font-normal text-[#d4d4d4]">
        <svg viewBox="0 0 16 16" className="mr-[15px] h-4 w-4">
          <rect width="16" height="16" fill="#4f8a00" />
          <path d="M0 9c3 6 10 6 16 1v6H0z" fill="#76b900" />
          <circle cx="9" cy="5" r="5.500" fill="#1c1c1c" />
          <circle cx="7" cy="5" r="2.500" fill="#e8e8e8" />
          <circle cx="12" cy="3" r="2" fill="#e8e8e8" />
          <circle cx="10" cy="8" r="1.500" fill="#bdbdbd" />
        </svg>
        <span>CREATE</span>
        <span className="ml-2.5 text-[#8f8f86]">2022.1.3</span>
        <span className="ml-1.5">Beta</span>
        <span className="mx-2 h-[15px] w-px bg-[#76b900]" />
        <span className="flex-1">New Stage*</span>
        <div className="flex items-center gap-[35px]">
          <button aria-label="Minimize">
            <svg viewBox="0 0 11 11" className="h-[11px] w-[11px]">
              <path d="M0 7h11v2H0z" fill="#e0e0e0" />
            </svg>
          </button>
          <button aria-label="Restore">
            <svg viewBox="0 0 11 11" className="h-[11px] w-[11px]" fill="none" stroke="#e0e0e0" strokeWidth="2">
              <path d="M3 2.500V1h7v7H8" />
              <path d="M1 4h6v6H1z" strokeWidth="1.500" />
            </svg>
          </button>
          <button aria-label="Close">
            <svg viewBox="0 0 11 11" className="h-[11px] w-[11px]" stroke="#e0e0e0" strokeWidth="1.600">
              <path d="M.5.5l10 10M10.500.5l-10 10" />
            </svg>
          </button>
        </div>
      </header>

      <div className="flex h-[26px] shrink-0 items-center border-b-2 border-[#262220] bg-[#454545] pt-0.5 pr-0.5 pl-[9px]">
        <nav className="flex flex-1 gap-3">
          {menus.map((menu) => (
            <button key={menu}>{menu}</button>
          ))}
        </nav>
        <span className="mr-[22px]">
          CACHE: <span className="text-[#76b900]">ON</span>
        </span>
        <span className="flex items-center gap-1">
          <span>
            LIVE SYNC: <span className="text-[#cf6a6a]">OFF</span>
          </span>
          <FaCloud size={16} className="text-[#cf6a6a]" />
        </span>
      </div>

      <main className="flex min-h-0 flex-1 gap-0.5">
        <div className="flex min-w-0 flex-1 flex-col">
          <div className="flex min-h-0 flex-[500] gap-0.5">
            <Toolbar />
            <Viewport />
          </div>
          <ActionGraphPanel />
        </div>
        <div className="flex w-[693px] shrink-0 flex-col">
          <Stage />
          <Property />
        </div>
      </main>

      <footer className="h-8 shrink-0 border-t-2 border-[#262220] bg-[#454545]" />
    </div>
  );
}
